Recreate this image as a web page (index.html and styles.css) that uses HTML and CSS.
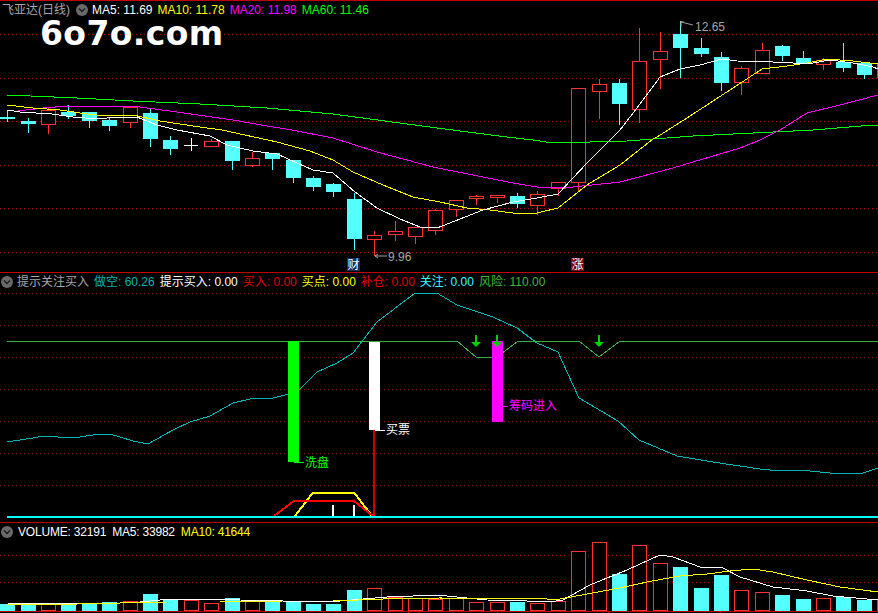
FILE: index.html
```html
<!DOCTYPE html>
<html lang="zh">
<head>
<meta charset="utf-8">
<title>飞亚达(日线)</title>
<link rel="stylesheet" href="styles.css">
</head>
<body>
<main class="terminal">

<section class="pane pane-price">
  <div class="legend legend-price">
    <span class="title title-stock">飞亚达(日线)</span>
    <svg class="toggle" viewBox="0 0 12 12"><circle cx="6" cy="6" r="6"/><path d="M3 4.5 6 7.5 9 4.5"/></svg>
    <span class="item c-white">MA5: 11.69</span>
    <span class="item c-yellow">MA10: 11.78</span>
    <span class="item c-magenta">MA20: 11.98</span>
    <span class="item c-green">MA60: 11.46</span>
  </div>
  <div class="logo">6o7o.com</div>
  <svg class="chart chart-price" viewBox="0 19 878 253">
    <path class="grid" d="M0 34.5H878M0 78.5H878M0 121.5H878M0 165.5H878M0 208.5H878M0 252.5H878"/>
    <path class="wick-down" d="M7.5 110V122M28.5 118V133M68.5 105V119M89.5 112V128M109.5 117V131M150.5 109V147M170.5 136V155M232.5 141V170M272.5 153V170M293.5 160V183M313.5 176V191M333.5 183V197M354.5 193V250M517.5 193V208M619.5 79V125M680.5 21V78M701.5 38V57M721.5 52V91M782.5 45V61M803.5 51V64M843.5 43V72M864.5 62V79"/>
    <path class="wick-up" d="M48.5 108V110M48.5 125V134M130.5 123V128M211.5 139V141M252.5 152V158M252.5 166V167M374.5 231V235M374.5 240V256M395.5 221V231M395.5 235V241M415.5 237V244M435.5 209V210M435.5 231V235M456.5 210V217M476.5 195V196M476.5 199V205M497.5 198V203M537.5 191V194M537.5 206V215M558.5 189V196M578.5 183V191M599.5 79V84M599.5 92V119M639.5 28V61M639.5 110V123M660.5 32V51M660.5 60V89M741.5 66V68M741.5 83V95M762.5 43V50M823.5 58V60M823.5 65V70"/>
    <path class="doji" d="M191.5 138V151M184 145.5H198"/>
    <g class="body-down">
      <rect x="0" y="117" width="15" height="2"/><rect x="21" y="121" width="15" height="3"/><rect x="61" y="112" width="15" height="4"/><rect x="82" y="112" width="15" height="9"/><rect x="102" y="120" width="15" height="6"/><rect x="143" y="113" width="15" height="26"/><rect x="163" y="140" width="15" height="9"/><rect x="225" y="141" width="15" height="20"/><rect x="265" y="153" width="15" height="6"/><rect x="286" y="160" width="15" height="18"/><rect x="306" y="178" width="15" height="9"/><rect x="326" y="184" width="15" height="8"/><rect x="347" y="199" width="15" height="40"/><rect x="510" y="196" width="15" height="8"/><rect x="612" y="83" width="15" height="21"/><rect x="673" y="34" width="15" height="14"/><rect x="694" y="48" width="15" height="6"/><rect x="714" y="57" width="15" height="26"/><rect x="775" y="46" width="15" height="10"/><rect x="796" y="58" width="15" height="6"/><rect x="836" y="62" width="15" height="6"/><rect x="857" y="63" width="15" height="12"/>
    </g>
    <g class="body-up">
      <rect x="41.5" y="110.5" width="14" height="14"/><rect x="123.5" y="107.5" width="14" height="15"/><rect x="204.5" y="141.5" width="14" height="5"/><rect x="245.5" y="158.5" width="14" height="7"/><rect x="367.5" y="235.5" width="14" height="4"/><rect x="388.5" y="231.5" width="14" height="3"/><rect x="408.5" y="227.5" width="14" height="9"/><rect x="428.5" y="210.5" width="14" height="20"/><rect x="449.5" y="200.5" width="14" height="9"/><rect x="469.5" y="196.5" width="14" height="2"/><rect x="490.5" y="195.5" width="14" height="2"/><rect x="530.5" y="194.5" width="14" height="11"/><rect x="551.5" y="182.5" width="14" height="6"/><rect x="571.5" y="88.5" width="14" height="94"/><rect x="592.5" y="84.5" width="14" height="7"/><rect x="632.5" y="61.5" width="14" height="48"/><rect x="653.5" y="51.5" width="14" height="8"/><rect x="734.5" y="68.5" width="14" height="14"/><rect x="755.5" y="50.5" width="14" height="23"/><rect x="816.5" y="60.5" width="14" height="4"/><rect x="877.5" y="63.5" width="14" height="14"/>
    </g>
    <polyline class="ma ma60" points="7,95 77,98 133,101 200,104 267,108 333,114 437,128 507,137 533,140 553,143 627,141 693,136 713,135 773,132 813,130 873,125 878,125"/>
    <polyline class="ma ma20" points="18,111 43,108 67,106 140,107 177,112 233,120 267,126 292,130 333,138 377,152 433,167 483,177 513,183 543,188 573,187 620,182 673,168 740,148 760,140 780,130 807,113 840,105 878,95"/>
    <polyline class="ma ma10" points="7,105 33,108 60,110 87,114 107,116 133,115 160,121 200,127 222,130 277,142 310,151 333,160 353,172 383,185 413,197 440,202 467,208 490,210 513,213 537,213 558,208 587,185 620,165 653,139 657,137 687,118 733,88 762,69 787,66 807,63 827,59 853,61 878,64"/>
    <polyline class="ma ma5" points="7,110 20,112 52,114 73,117 97,119 117,117 137,117 157,125 177,130 210,136 227,145 253,151 277,154 297,163 313,170 333,173 355,192 377,208 400,219 420,227 437,228 483,210 513,202 537,198 558,194 587,163 610,140 620,130 637,108 660,77 680,69 700,65 722,59 737,61 773,62 793,63 813,63 830,60 853,63 873,67 878,69"/>
    <path class="pointer" d="M681 21V27M681 22H684M681 22 693 25"/>
    <text class="price-tag" x="695" y="31">12.65</text>
    <path class="pointer" d="M375 256H387M375 256 378 254M375 256 378 258"/>
    <text class="price-tag" x="388" y="261">9.96</text>
    <rect class="tag-news" x="347" y="258" width="13" height="13"/>
    <text class="tag-text" x="347.5" y="269">财</text>
    <rect class="tag-limit" x="571" y="258" width="13" height="13"/>
    <text class="tag-text" x="571.5" y="269">涨</text>
  </svg>
</section>

<section class="pane pane-signal">
  <div class="legend">
    <svg class="toggle" viewBox="0 0 12 12"><circle cx="6" cy="6" r="6"/><path d="M3 4.5 6 7.5 9 4.5"/></svg>
    <span class="title">提示关注买入</span>
    <span class="item c-teal">做空: 60.26</span>
    <span class="item c-white">提示买入: 0.00</span>
    <span class="item c-red">买入: 0.00</span>
    <span class="item c-yellow">买点: 0.00</span>
    <span class="item c-red">补仓: 0.00</span>
    <span class="item c-cyan">关注: 0.00</span>
    <span class="item c-risk">风险: 110.00</span>
  </div>
  <svg class="chart chart-signal" viewBox="0 291 878 231">
    <path class="grid grid-dim" d="M0 293.5H878M0 325.5H878M0 357.5H878M0 389.5H878M0 421.5H878M0 453.5H878M0 485.5H878"/>
    <polyline class="ma risk-line" points="7,442 33,438 43,436 73,438 100,434 110,434 133,441 148,444 173,430 190,422 210,416 233,403 250,399 273,398 297,392 317,372 337,363 353,353 377,322 415,293 437,293 457,305 493,317 517,328 537,343 558,352 573,385 579,398 618,421 639,440 677,456 713,462 760,469 780,471 800,470 840,474 863,473 878,468"/>
    <polyline class="ma watch-line" points="7,341 457,341 476,357 497,357 518,341 579,341 599,357 620,341 878,341"/>
    <rect class="bar-wash" x="288" y="341" width="11" height="121"/>
    <rect class="bar-buy" x="369" y="342" width="11" height="88"/>
    <rect class="bar-chip" x="492" y="341" width="11" height="81"/>
    <path class="stem" d="M374 430V516"/>
    <path class="tick tick-green" d="M294 462.5H304"/>
    <path class="tick tick-white" d="M375 430.5H385"/>
    <path class="tick tick-magenta" d="M503 406.5H508"/>
    <text class="label label-green" x="305" y="467">洗盘</text>
    <text class="label label-white" x="386" y="434">买票</text>
    <text class="label label-magenta" x="509" y="410">筹码进入</text>
    <path class="arrow" d="M475 335H477V342H481L476 347 471 342H475Z"/>
    <path class="arrow" d="M496 335H498V342H502L497 347 492 342H496Z"/>
    <path class="arrow" d="M598 335H600V342H604L599 347 594 342H598Z"/>
    <path class="hump hump-yellow" d="M295 516 313 492.5H354L372 516"/>
    <path class="hump hump-red" d="M274 516 294 501H354L373 516"/>
    <path class="pulse" d="M333 505V516M354 505V516"/>
    <path class="baseline" d="M7 516.5H878"/>
  </svg>
</section>

<section class="pane pane-volume">
  <div class="legend legend-volume">
    <svg class="toggle" viewBox="0 0 12 12"><circle cx="6" cy="6" r="6"/><path d="M3 4.5 6 7.5 9 4.5"/></svg>
    <span class="title c-white">VOLUME: 32191</span>
    <span class="item c-white">MA5: 33982</span>
    <span class="item c-yellow">MA10: 41644</span>
  </div>
  <svg class="chart chart-volume" viewBox="0 541 878 72">
    <path class="grid" d="M0 555.5H878M0 582.5H878"/>
    <g class="body-down">
      <rect x="0" y="604" width="15" height="7"/><rect x="21" y="605" width="15" height="6"/><rect x="61" y="604" width="15" height="7"/><rect x="82" y="603" width="15" height="8"/><rect x="102" y="602" width="15" height="9"/><rect x="143" y="594" width="15" height="17"/><rect x="163" y="599" width="15" height="12"/><rect x="225" y="598" width="15" height="13"/><rect x="265" y="601" width="15" height="10"/><rect x="286" y="601" width="15" height="10"/><rect x="306" y="604" width="15" height="7"/><rect x="326" y="604" width="15" height="7"/><rect x="347" y="590" width="15" height="21"/><rect x="510" y="602" width="15" height="9"/><rect x="612" y="574" width="15" height="37"/><rect x="673" y="567" width="15" height="44"/><rect x="694" y="588" width="15" height="23"/><rect x="714" y="575" width="15" height="36"/><rect x="775" y="595" width="15" height="16"/><rect x="796" y="599" width="15" height="12"/><rect x="836" y="597" width="15" height="14"/><rect x="857" y="600" width="15" height="11"/>
    </g>
    <g class="body-up">
      <rect x="41.5" y="604.5" width="14" height="6"/><rect x="123.5" y="601.5" width="14" height="9"/><rect x="184.5" y="600.5" width="14" height="10"/><rect x="204.5" y="603.5" width="14" height="7"/><rect x="245.5" y="601.5" width="14" height="9"/><rect x="367.5" y="588.5" width="14" height="22"/><rect x="388.5" y="597.5" width="14" height="13"/><rect x="408.5" y="598.5" width="14" height="12"/><rect x="428.5" y="599.5" width="14" height="11"/><rect x="449.5" y="598.5" width="14" height="12"/><rect x="469.5" y="602.5" width="14" height="8"/><rect x="490.5" y="602.5" width="14" height="8"/><rect x="530.5" y="603.5" width="14" height="7"/><rect x="551.5" y="601.5" width="14" height="9"/><rect x="571.5" y="551.5" width="14" height="59"/><rect x="592.5" y="542.5" width="14" height="68"/><rect x="632.5" y="545.5" width="14" height="65"/><rect x="653.5" y="563.5" width="14" height="47"/><rect x="734.5" y="590.5" width="14" height="20"/><rect x="755.5" y="592.5" width="14" height="18"/><rect x="816.5" y="598.5" width="14" height="12"/><rect x="877.5" y="600.5" width="14" height="10"/>
    </g>
    <polyline class="ma ma5" points="7,603 80,604 100,604 140,602 160,600 180,599 220,599 240,600 283,601 320,601 340,601 363,599 387,597 440,595 447,596 467,598 487,600 527,601 550,602 563,600 590,585 607,578 627,570 660,555 673,557 700,567 723,568 740,577 773,587 807,591 833,596 878,600"/>
    <polyline class="ma ma10" points="7,604 77,604 120,603 167,602 220,602 283,601 333,601 383,599 440,598 547,599 560,599 587,594 620,588 647,582 680,576 707,574 730,571 753,569 773,572 807,580 840,587 878,592"/>
    <path class="axis" d="M0 611.5H878"/>
    <path class="axis" d="M235.5 612V613M323.5 612V613M408.5 612V613M497.5 612V613M608.5 612V613M720.5 612V613"/>
  </svg>
</section>

</main>
</body>
</html>
```
FILE: styles.css
```css
* { box-sizing: border-box; }

html, body {
  margin: 0;
  padding: 0;
  background: #000;
}

.terminal {
  width: 878px;
  height: 613px;
  display: flex;
  flex-direction: column;
  overflow: hidden;
  background: #000;
  font-family: "Liberation Sans", "Noto Sans CJK SC", sans-serif;
  font-size: 12px;
}

.pane {
  position: relative;
  display: flex;
  flex-direction: column;
  border-top: 1px solid #c00000;
}
.pane-price { height: 272px; }
.pane-signal { height: 250px; }
.pane-volume { height: 91px; }

.chart {
  display: block;
  width: 878px;
  flex: 1 1 auto;
  min-height: 0;
}

.legend {
  display: flex;
  align-items: center;
  gap: 5px;
  height: 18px;
  flex: none;
  padding-left: 1px;
  white-space: nowrap;
  line-height: 18px;
}
.legend-price { padding-left: 2px; }
.legend-volume { gap: 6px; letter-spacing: -0.2px; }

.title { color: #a8a8a8; }
.title-stock { margin-right: 1px; }

.toggle { width: 12px; height: 12px; flex: none; margin-right: -1px; }
.toggle circle { fill: #6a6a6a; }
.toggle path { fill: none; stroke: #1c1c1c; stroke-width: 1.4; }

.c-white { color: #fff; }
.c-yellow { color: #ffff00; }
.c-magenta { color: #ff00ff; }
.c-green { color: #00ff00; }
.c-teal { color: #00b4b4; }
.c-red { color: #e00000; }
.c-cyan { color: #33ffff; }
.c-risk { color: #3cb83c; }

.logo {
  position: absolute;
  left: 40px;
  top: 19px;
  color: #fff;
  font-family: "DejaVu Sans", sans-serif;
  font-weight: 700;
  font-size: 33px;
  line-height: 28px;
  letter-spacing: 0.4px;
  white-space: nowrap;
}

.grid {
  fill: none;
  stroke: #b00000;
  stroke-width: 1;
  stroke-dasharray: 1 3;
}
.grid-dim { stroke: #980000; }

.wick-down, .wick-up, .doji, .pointer, .tick, .stem, .axis, .baseline, .pulse {
  fill: none;
  shape-rendering: crispEdges;
}
.wick-down { stroke: #54ffff; }
.wick-up { stroke: #ff3232; }
.doji { stroke: #fff; }
.body-down rect { fill: #54ffff; shape-rendering: crispEdges; }
.body-up rect { fill: #000; stroke: #ff3232; shape-rendering: crispEdges; }

.ma {
  fill: none;
  stroke-width: 1;
  shape-rendering: crispEdges;
}
.ma5 { stroke: #fff; }
.ma10 { stroke: #ffff00; }
.ma20 { stroke: #ff00ff; }
.ma60 { stroke: #00ff00; }
.risk-line { stroke: #00b8b8; }
.watch-line { stroke: #3cb03c; }

.pointer { stroke: #a0a0a0; shape-rendering: auto; }
.price-tag {
  fill: #a8a8a8;
  font-family: "Liberation Sans", sans-serif;
  font-size: 12px;
}
.tag-news { fill: #0c2f66; }
.tag-limit { fill: #800000; }
.tag-text {
  fill: #fff;
  font-family: "Noto Sans CJK SC", sans-serif;
  font-size: 12px;
}

.bar-wash { fill: #00ff00; }
.bar-buy { fill: #fff; }
.bar-chip { fill: #ff00ff; }
.stem { stroke: #d00000; stroke-width: 2; }
.tick-green { stroke: #00ff00; }
.tick-white { stroke: #fff; }
.tick-magenta { stroke: #ff00ff; }

.label {
  font-family: "Noto Sans CJK SC", sans-serif;
  font-size: 12px;
}
.label-green { fill: #00ff00; }
.label-white { fill: #fff; }
.label-magenta { fill: #ff00ff; }

.arrow { fill: #00d000; }

.hump { fill: none; stroke-width: 2; shape-rendering: crispEdges; }
.hump-yellow { stroke: #ffff00; }
.hump-red { stroke: #ff0000; }
.pulse { stroke: #fff; stroke-width: 2; }
.baseline { stroke: #00ffff; stroke-width: 2; }
.axis { stroke: #c00000; }
```
